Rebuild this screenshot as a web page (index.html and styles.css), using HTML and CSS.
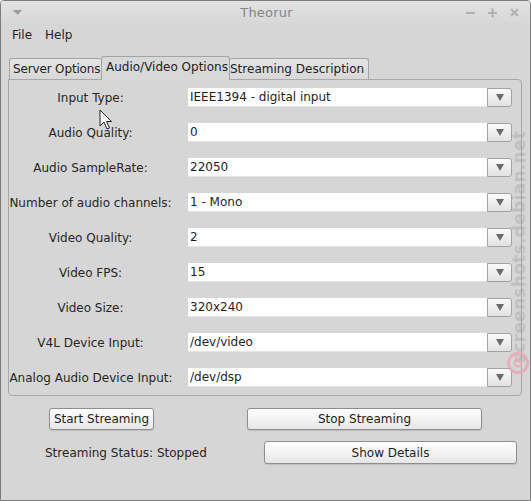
FILE: index.html
```html
<!DOCTYPE html>
<html>
<head>
<meta charset="utf-8">
<title>Theorur</title>
<link rel="stylesheet" href="styles.css">
</head>
<body>
<div class="window">
  <div class="titlebar">
    <span class="tb-menu"><svg width="9" height="6" viewBox="0 0 9 6"><path d="M0 0H9L4.5 5Z" fill="#9a9a9a"/></svg></span>
    <span class="tb-title">Theorur</span>
    <span class="tb-controls">
      <svg width="11" height="11" viewBox="0 0 11 11"><rect x="1" y="5" width="9" height="2" fill="#b0b0b0"/></svg>
      <svg width="11" height="11" viewBox="0 0 11 11"><rect x="1" y="5" width="9" height="2" fill="#b0b0b0"/><rect x="4.5" y="1.5" width="2" height="9" fill="#b0b0b0"/></svg>
      <svg width="11" height="11" viewBox="0 0 11 11"><path d="M2 2L9 9M9 2L2 9" stroke="#b0b0b0" stroke-width="2"/></svg>
    </span>
  </div>
  <div class="menubar"><span>File</span><span>Help</span></div>
  <div class="tabs">
    <div class="tab tab-server">Server Options</div>
    <div class="tab tab-active">Audio/Video Options</div>
    <div class="tab tab-desc">Streaming Description</div>
  </div>
  <div class="pane">
    <div class="label">Input Type:</div>
    <div class="combo"><div class="entry">IEEE1394 - digital input</div><div class="arrow"><svg width="8" height="7" viewBox="0 0 8 7"><path d="M0 0H8L4 7Z" fill="#6a6a6a"/></svg></div></div>
    <div class="label">Audio Quality:</div>
    <div class="combo"><div class="entry">0</div><div class="arrow"><svg width="8" height="7" viewBox="0 0 8 7"><path d="M0 0H8L4 7Z" fill="#6a6a6a"/></svg></div></div>
    <div class="label">Audio SampleRate:</div>
    <div class="combo"><div class="entry">22050</div><div class="arrow"><svg width="8" height="7" viewBox="0 0 8 7"><path d="M0 0H8L4 7Z" fill="#6a6a6a"/></svg></div></div>
    <div class="label">Number of audio channels:</div>
    <div class="combo"><div class="entry">1 - Mono</div><div class="arrow"><svg width="8" height="7" viewBox="0 0 8 7"><path d="M0 0H8L4 7Z" fill="#6a6a6a"/></svg></div></div>
    <div class="label">Video Quality:</div>
    <div class="combo"><div class="entry">2</div><div class="arrow"><svg width="8" height="7" viewBox="0 0 8 7"><path d="M0 0H8L4 7Z" fill="#6a6a6a"/></svg></div></div>
    <div class="label">Video FPS:</div>
    <div class="combo"><div class="entry">15</div><div class="arrow"><svg width="8" height="7" viewBox="0 0 8 7"><path d="M0 0H8L4 7Z" fill="#6a6a6a"/></svg></div></div>
    <div class="label">Video Size:</div>
    <div class="combo"><div class="entry">320x240</div><div class="arrow"><svg width="8" height="7" viewBox="0 0 8 7"><path d="M0 0H8L4 7Z" fill="#6a6a6a"/></svg></div></div>
    <div class="label">V4L Device Input:</div>
    <div class="combo"><div class="entry">/dev/video</div><div class="arrow"><svg width="8" height="7" viewBox="0 0 8 7"><path d="M0 0H8L4 7Z" fill="#6a6a6a"/></svg></div></div>
    <div class="label label-wide">Analog Audio Device Input:</div>
    <div class="combo"><div class="entry">/dev/dsp</div><div class="arrow"><svg width="8" height="7" viewBox="0 0 8 7"><path d="M0 0H8L4 7Z" fill="#6a6a6a"/></svg></div></div>
  </div>
  <div class="row row-1">
    <button class="btn btn-start">Start Streaming</button>
    <button class="btn btn-stop">Stop Streaming</button>
  </div>
  <div class="row row-2">
    <span class="status">Streaming Status: Stopped</span>
    <button class="btn btn-details">Show Details</button>
  </div>

  <div class="watermark">screenshots.debian.net</div>
  <svg class="wm-logo" width="24" height="24" viewBox="0 0 24 24"><circle cx="12" cy="12" r="9.5" fill="none" stroke="#e9a6b6" stroke-width="3" opacity="0.85"/><circle cx="12" cy="12" r="3.5" fill="none" stroke="#e9a6b6" stroke-width="2" opacity="0.85"/></svg>
  <svg class="cursor" width="13" height="21" viewBox="0 0 13 21"><path d="M1 1V17L5 13L8 20L10.5 19L7.5 12.5H12.5Z" fill="#ffffff" stroke="#1e1e1e" stroke-width="1" stroke-linejoin="round"/></svg>
</div>
</body>
</html>
```
FILE: styles.css
```css
* { box-sizing: border-box; }
html, body { margin: 0; padding: 0; background: #ffffff; }
body {
  font-family: "DejaVu Sans", "Liberation Sans", sans-serif;
  font-size: 12px;
  color: #2a2a2a;
}
.window {
  position: relative;
  width: 531px;
  height: 501px;
  background: #d6d6d6;
  border: 1px solid #7c7c7c;
  border-radius: 4px 4px 0 0;
  overflow: hidden;
}
.titlebar {
  height: 22px;
  display: flex;
  align-items: center;
  justify-content: space-between;
  padding: 0 10px 0 12px;
  background: linear-gradient(#e2e2e2, #d8d8d8);
}
.tb-menu { width: 60px; display: flex; align-items: center; padding-top: 1px; }
.tb-title { font-size: 13px; color: #858585; letter-spacing: 0.2px; }
.tb-controls { width: 60px; display: flex; gap: 11px; justify-content: flex-end; align-items: center; }
.menubar {
  height: 22px;
  display: flex;
  align-items: center;
  gap: 13px;
  padding: 2px 0 0 11px;
  color: #1e1e1e;
}
.tabs {
  display: flex;
  align-items: flex-end;
  height: 24px;
  margin-top: 10px;
  padding-left: 8px;
  position: relative;
  z-index: 1;
}
.tab {
  height: 21px;
  border: 1px solid #a4a4a4;
  border-bottom: none;
  border-radius: 3px 3px 0 0;
  background: linear-gradient(#e4e4e4, #d8d8d8);
  white-space: nowrap;
  overflow: hidden;
  line-height: 21px;
  color: #222;
}
.tab-server { width: 92px; padding-left: 3px; border-right: none; letter-spacing: -0.15px; }
.tab-active {
  width: 129px;
  height: 24px;
  padding-left: 4px;
  line-height: 21px;
  background: #d8d8d8;
  margin-bottom: -1px;
}
.tab-desc { width: 139px; padding-left: 0; border-left: none; }
.pane {
  margin-left: 7px;
  width: 514px;
  height: 317px;
  border: 1px solid #a8a8a8;
  border-radius: 0 4px 4px 4px;
  padding: 8px 9px 8px 0;
  display: grid;
  grid-template-columns: 163px 1fr;
  column-gap: 16px;
  grid-auto-rows: 19px;
  row-gap: 16px;
  align-items: center;
}
.label {
  text-align: center;
  white-space: nowrap;
  color: #262626;
}
.label-wide { margin-left: -1px; margin-right: -2px; }
.combo {
  display: flex;
  height: 19px;
}
.entry {
  flex: 1;
  background: #ffffff;
  border-bottom: 1px solid #e4e4e4;
  padding-left: 2px;
  line-height: 18px;
  color: #1e1e1e;
  white-space: nowrap;
}
.arrow {
  width: 25px;
  height: 19px;
  border: 1px solid #a2a2a2;
  border-radius: 0 3px 3px 0;
  background: linear-gradient(#fafafa, #e2e2e2);
  display: flex;
  align-items: center;
  justify-content: center;
}
.row { display: flex; align-items: center; }
.row-1 { margin-top: 12px; padding-left: 48px; height: 22px; }
.row-2 { margin-top: 11px; padding-left: 44px; height: 23px; }
.btn {
  font-family: "DejaVu Sans", "Liberation Sans", sans-serif;
  font-size: 12px;
  color: #1e1e1e;
  background: linear-gradient(#ffffff, #e6e6e6);
  border: 1px solid #8e8e8e;
  border-radius: 3px;
  box-shadow: 0 1px 1px rgba(0,0,0,0.12);
  padding: 0;
  height: 100%;
}
.btn-start { width: 105px; }
.btn-stop { width: 235px; margin-left: 93px; }
.status { width: 219px; color: #262626; }
.btn-details { width: 253px; }
.watermark {
  position: absolute;
  left: 518px;
  top: 246px;
  transform: translate(-50%, -50%) rotate(-90deg);
  font-size: 17px;
  font-weight: bold;
  color: rgba(150,150,150,0.35);
  white-space: nowrap;
  letter-spacing: 0.3px;
}
.wm-logo { position: absolute; left: 505px; top: 350px; }
.cursor { position: absolute; left: 98px; top: 108px; }
```
